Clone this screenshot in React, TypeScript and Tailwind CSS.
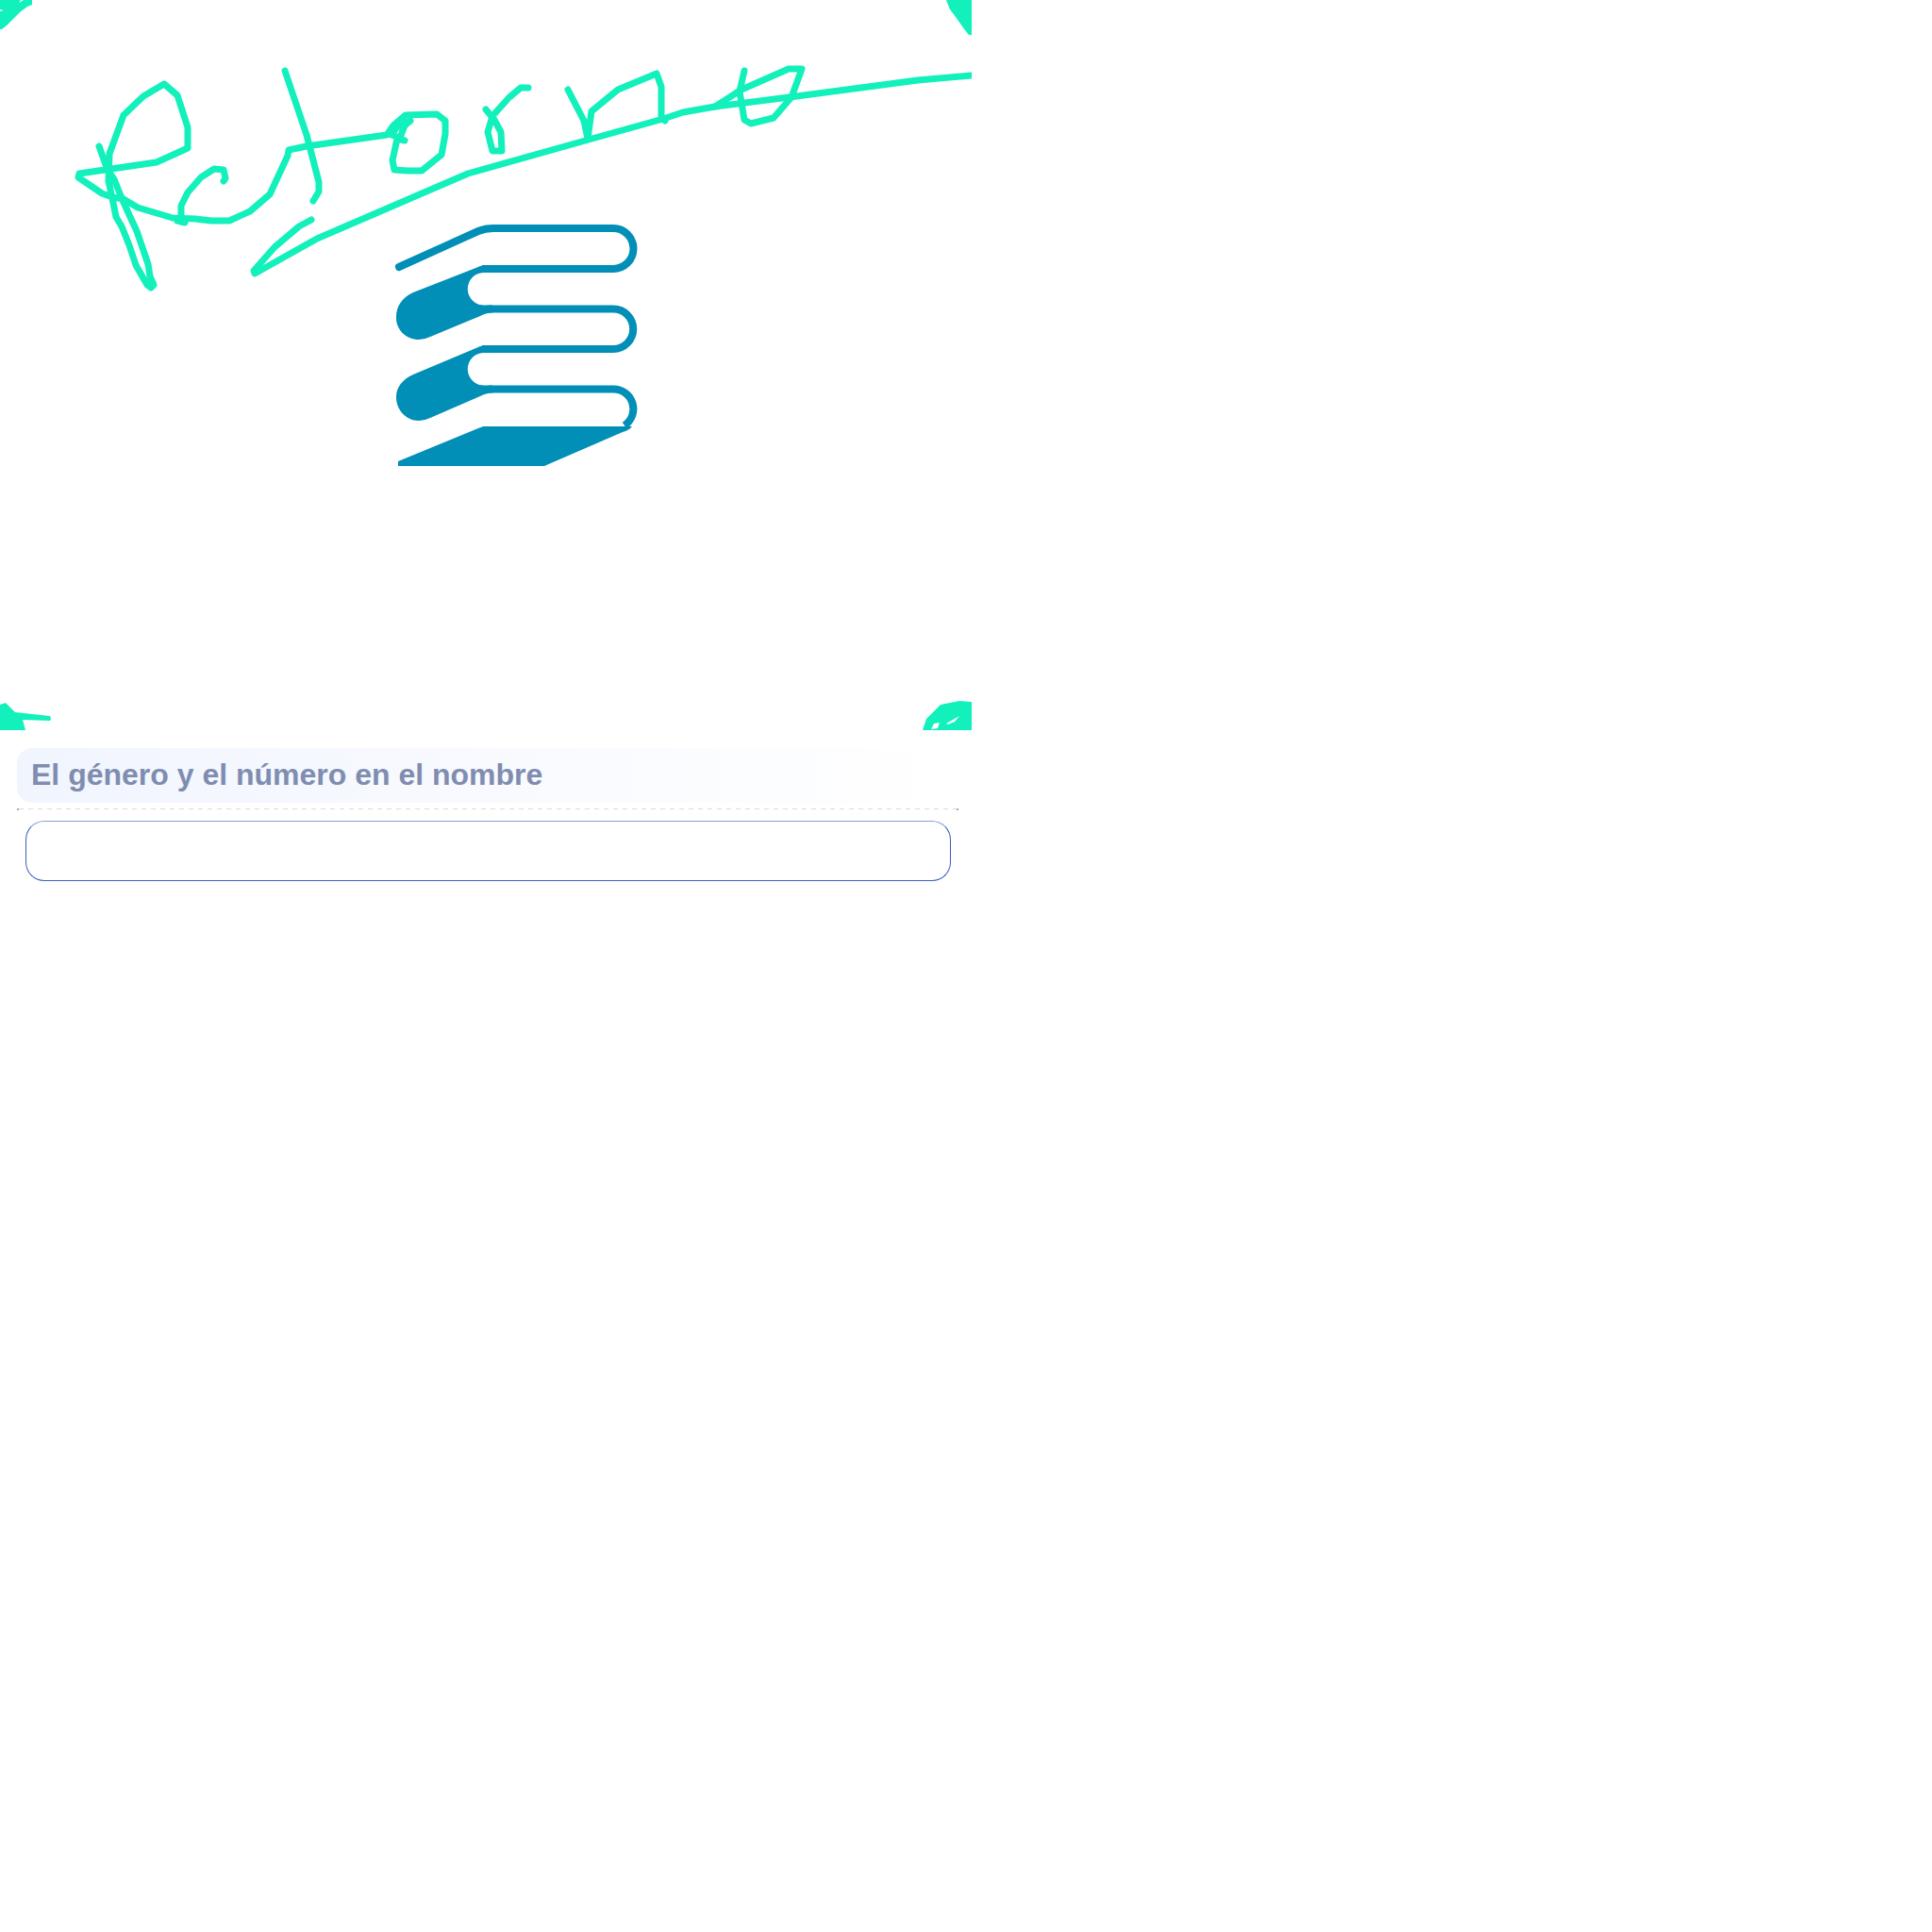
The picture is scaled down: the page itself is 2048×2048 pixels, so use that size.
import React from 'react';

const TEAL = '#12f0bb';
const BLUE = '#018fb7';

// signature strokes, one polyline per pen stroke
const strokes = [
  '105,155 114,180 121,190 129,210 138,230 145,245 157,280 159,293 163,302 160,305 156,302 144,281 137,260 129,240 123,230 119,210 115,192 116,163 131,122 152,102 174,89 188,101 199,135 199,157 166,172 84,184 83,188 108,205 119,209 131,211 146,220 183,231 207,232 224,234 243,234 265,224 286,206 305,165 306,159 325,155 410,143 417,133 430,122 463,121 472,128 472,142 468,164 447,181 432,181 418,180 416,170 421,147 429,149',
  '415,143 424,146 429,133 435,128 423,132 417,140',
  '302,75 325,143 338,193 338,203 332,213',
  '237,192 239,189 237,180 227,179 213,188 199,204 192,218 192,233 196,236 188,234',
  '330,233 317,240 291,262 269,287 270,290 336,253 496,184 624,148 703,126 724,119 758,113 837,103 973,85 1030,80',
  '515,116 524,127 531,140 532,160 522,160 517,140 522,123 540,103 552,93 560,93',
  '602,95 619,128 623,147 627,118 655,95 696,78 701,92 701,125 705,128',
  '758,113 786,95 836,73 850,73 839,103 820,125 796,131 789,127 784,97 789,75',
];

function Drawing() {
  return (
    <svg className="block w-[1030px] h-[774px]" viewBox="0 0 1030 774">
      <g fill="none" stroke={TEAL} strokeWidth="7" strokeLinecap="round" strokeLinejoin="round">
        {strokes.map((s, i) => <polyline key={i} points={s} />)}
      </g>

      {/* corner marks */}
      <g fill={TEAL}>
        <polygon points="0,0 34,0 34,5 29,7 21,13 7,27 2,31 0,31" />
        <polygon points="1003,0 1007,10 1013,18 1023,32 1027,37 1030,37 1030,0" />
        <polygon points="0,747 6,745 16,755 53,759 54,762 53,764 24,763 27,774 0,774" />
        <polygon points="978,774 982,762 997,747 1017,743 1030,744 1030,774" />
      </g>
      <g fill="#ffffff">
        <polygon points="20,3 25,0 22,0" />
        <polygon points="0,10 4,11 0,12" />
        <polygon points="987,773 990,767 996,766 994,772" />
        <polygon points="1003,767 1017,759 1012,765 1005,768" />
      </g>

      {/* logo */}
      <g fill="none" stroke={BLUE} strokeWidth="8" strokeLinecap="round">
        <path d="M423,283 L507,245 Q514,242 523,242 L650,242 A21.5,21.5 0 0 1 650,285 L513,285" />
        <path d="M518,327.5 L650,327.5 A21.25,21.25 0 0 1 650,370 L513,370" />
        <path d="M518,412.5 L650,412.5 A21,21 0 0 1 662,451" strokeLinecap="butt" />
      </g>
      <g fill={BLUE}>
        <path d="M516,281 Q511,281 507,283 L438,310 C427,315 420,324 420,336 L420,337 C420,350 431,360 444,360 Q450,360 456,357 L509,335 Q515,331.5 522,331.5 L522,323.5 L513,323.5 A17,17 0 0 1 513,289 L516,289 Z" />
        <path d="M516,366 Q511,366 507,368 L438,397 C427,402 420,410 420,421 C420,435 431,446 444,446 Q450,446 456,443 L509,420 Q515,416.5 522,416.5 L522,408.5 L513,408.5 A17,17 0 0 1 513,374 L516,374 Z" />
        <path d="M512,452 L670,452 Q667,456 660,458 L577,494 L422,494 L422,489 Z" />
      </g>
    </svg>
  );
}

export default function App() {
  return (
    <div className="w-[1030px] bg-white font-['Liberation_Sans',Arial,sans-serif]">
      <Drawing />
      <div className="pt-[19px] pl-[18px]">
        <div className="flex items-center w-[998px] h-[58px] pl-[15px] pb-[2px] rounded-[16px] bg-gradient-to-r from-[#f1f5fe] to-white">
          <h2 className="text-[32px] font-bold text-[#7f8db0]">El género y el número en el nombre</h2>
        </div>
        <div className="flex items-center mt-[6px] w-[998px] h-px">
          <div className="w-[2px] h-[2px] bg-[#aaaaaa]"></div>
          <div className="flex-1 h-px bg-[repeating-linear-gradient(90deg,#d9d9d9_0_5px,transparent_5px_10px)]"></div>
          <div className="w-[2px] h-[2px] bg-[#aaaaaa]"></div>
        </div>
        <input
          type="text"
          className="block mt-[12px] ml-[9px] w-[981px] h-[64px] rounded-[20px] border border-[#3d5ec0] border-t-[#8b9ed8] bg-white outline-none"
        />
      </div>
    </div>
  );
}
